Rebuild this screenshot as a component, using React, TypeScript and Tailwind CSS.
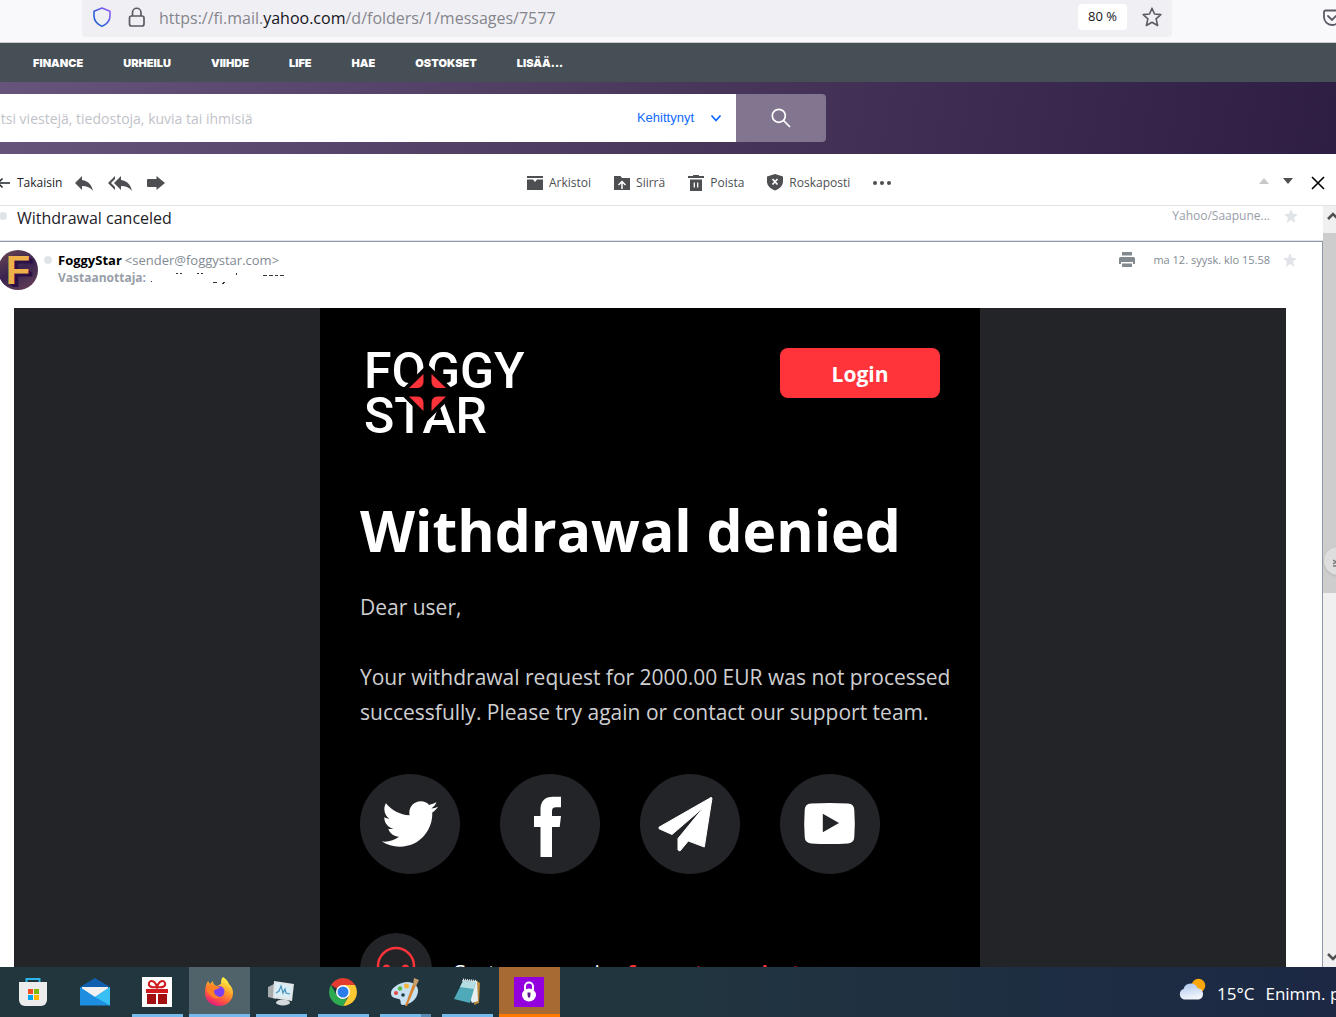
import { FaTwitter } from "react-icons/fa";
import { MdReply, MdReplyAll } from "react-icons/md";

const navLinks = ["FINANCE", "URHEILU", "VIIHDE", "LIFE", "HAE", "OSTOKSET", "LISÄÄ..."];

function BrowserBar() {
  return (
    <header className="flex h-[43px] shrink-0 items-start border-b border-[#cccccf] bg-[#f9f9fb]">
      <div className="ml-[82px] flex h-[37px] min-w-0 flex-1 items-center rounded-b bg-[#f0f0f4] pr-[10px] pb-1 pl-[10px]">
        <svg className="h-5 w-5 shrink-0" viewBox="0 0 20 20" fill="none">
          <defs>
            <linearGradient id="shield" x1="0" y1="1" x2="1" y2="0">
              <stop offset="0.3" stopColor="#2a5fd8" />
              <stop offset="1" stopColor="#9a5cf8" />
            </linearGradient>
          </defs>
          <path
            d="M10 1 18 4.2V9C18 13.5 14.5 18 10 19.2 5.5 18 2 13.5 2 9V4.2Z"
            stroke="url(#shield)"
            strokeWidth="1.6"
            strokeLinejoin="round"
          />
        </svg>
        <svg className="ml-[15px] h-5 w-5 shrink-0" viewBox="0 0 20 20" fill="none" stroke="#5b5b66" strokeWidth="1.7">
          <rect x="2.5" y="9" width="14.5" height="10" rx="2" />
          <path d="M5.5 9V5.5a4.2 4.2 0 0 1 8.5 0V9" />
        </svg>
        <p className="mt-[2px] ml-3 min-w-0 flex-1 truncate font-['Open_Sans',sans-serif] text-[16px] leading-6 text-[#85858d]">
          https://fi.mail.<span className="text-[#15141a]">yahoo.com</span>/d/folders/1/messages/7577
        </p>
        <button className="h-[26px] w-[49px] shrink-0 rounded bg-white font-['Open_Sans',sans-serif] text-[13px] text-[#15141a]">
          80 %
        </button>
        <button aria-label="Bookmark" className="ml-[15px] shrink-0">
          <svg className="h-5 w-5" viewBox="0 0 20 20" fill="none" stroke="#5b5b66" strokeWidth="1.6" strokeLinejoin="round">
            <path d="M10 1.2 12.5 7l6.3.6-4.7 4.2 1.5 6.7L10 15.2l-5.6 3.3 1.5-6.7L1.2 7.6 7.5 7Z" />
          </svg>
        </button>
      </div>
      <div className="flex h-9 w-[164px] shrink-0 items-center justify-end overflow-hidden">
        <button aria-label="Pocket" className="-mr-[6px]">
          <svg className="h-5 w-5" viewBox="0 0 20 20" fill="none" stroke="#5b5b66" strokeWidth="1.8">
            <path d="M3.5 2.5h13A1.5 1.5 0 0 1 18 4v5a8 8 0 0 1-16 0V4a1.5 1.5 0 0 1 1.5-1.5Z" />
            <path d="m6 8 4 4 4-4" strokeLinecap="round" />
          </svg>
        </button>
      </div>
    </header>
  );
}

function YahooHeader() {
  return (
    <>
      <nav className="flex h-[39px] shrink-0 items-center gap-10 bg-[#464e56] pt-[2px] pl-[33px] font-['Inter',sans-serif] text-[11px] font-black text-white">
        {navLinks.map((link) => (
          <a key={link} href="#">
            {link}
          </a>
        ))}
      </nav>
      <div className="flex h-[72px] shrink-0 items-center bg-linear-[100deg] from-[#67547b] via-[#49375c] to-[#2f1e44]">
        <form className="-ml-5 flex h-12 w-[846px] overflow-hidden rounded">
          <input
            type="text"
            aria-label="Haku"
            placeholder="Etsi viestejä, tiedostoja, kuvia tai ihmisiä"
            className="min-w-0 flex-1 bg-white pl-[13px] font-['Open_Sans',sans-serif] text-[14px] placeholder:text-[#bfc3c9]"
          />
          <button
            type="button"
            className="flex items-center gap-4 bg-white pr-[14px] font-['Liberation_Sans',sans-serif] text-[13px] text-[#0f69ff]"
          >
            Kehittynyt
            <svg className="h-3 w-3" viewBox="0 0 12 12" fill="none" stroke="#0f69ff" strokeWidth="1.8">
              <path d="m1.5 3.5 4.5 5 4.5-5" />
            </svg>
          </button>
          <button type="button" aria-label="Etsi" className="flex w-[90px] items-center justify-center bg-[#81758f]">
            <svg className="h-5 w-5" viewBox="0 0 20 20" fill="none" stroke="white" strokeWidth="1.7">
              <circle cx="7.8" cy="7.8" r="6.5" />
              <path d="m12.5 12.5 6.5 6.5" />
            </svg>
          </button>
        </form>
      </div>
    </>
  );
}

function ArchiveIcon() {
  return (
    <svg className="h-4 w-4" viewBox="0 0 16 16" fill="#4d4f52">
      <path d="M0 1h16v2H0ZM0 4.500h6L8 7l2-2.500h6V15H0Z" />
    </svg>
  );
}

function MoveIcon() {
  return (
    <svg className="h-4 w-4" viewBox="0 0 16 16">
      <path d="M0 1h6.500L8 3h8v12H0Z" fill="#4d4f52" />
      <path d="M8 14V7M4.500 10 8 6.500l3.500 3.500" fill="none" stroke="white" strokeWidth="1.5" />
    </svg>
  );
}

function TrashIcon() {
  return (
    <svg className="h-4 w-4" viewBox="0 0 16 16">
      <path d="M0 1h5V0h6v1h5v2H0ZM2 4.500h12V16H2Z" fill="#4d4f52" />
      <path d="M6.300 7.500v5M9.700 7.500v5" stroke="white" strokeWidth="1.3" />
    </svg>
  );
}

function SpamIcon() {
  return (
    <svg className="h-[17px] w-4" viewBox="0 0 16 17">
      <path d="m8 0 8 2.500v5c0 4-3.500 7.500-8 9-4.500-1.500-8-5-8-9v-5Z" fill="#4d4f52" />
      <path d="m5.500 5 5 5.500m0-5.500-5 5.500" stroke="white" strokeWidth="1.7" />
    </svg>
  );
}

const actions = [
  { label: "Arkistoi", icon: <ArchiveIcon /> },
  { label: "Siirrä", icon: <MoveIcon /> },
  { label: "Poista", icon: <TrashIcon /> },
  { label: "Roskaposti", icon: <SpamIcon /> },
];

function Toolbar() {
  return (
    <div className="flex h-[52px] shrink-0 items-center border-b border-[#e0e4e9] bg-white pt-[6px] font-['Open_Sans',sans-serif] text-[12px] text-[#4d4f52]">
      <div className="flex w-[527px] shrink-0 items-center">
        <button className="-ml-1 flex items-center gap-[7px] text-[#1d2228]">
          <svg className="h-[14px] w-[14px]" viewBox="0 0 14 14" fill="none" stroke="#1d2228" strokeWidth="1.5">
            <path d="M14 7H2M6.500 2.500 2 7l4.500 4.500" />
          </svg>
          Takaisin
        </button>
        <button aria-label="Vastaa" className="ml-[10px]">
          <MdReply className="h-6 w-6" />
        </button>
        <button aria-label="Vastaa kaikille" className="ml-3">
          <MdReplyAll className="h-6 w-6" />
        </button>
        <button aria-label="Lähetä edelleen" className="ml-[15px]">
          <svg className="h-4 w-[18px]" viewBox="0 0 18 16" fill="#4d4f52">
            <path d="M1 4h8.500V1L18 8l-8.500 7v-3H1a1 1 0 0 1-1-1V5a1 1 0 0 1 1-1Z" />
          </svg>
        </button>
      </div>
      <div className="flex flex-1 items-center gap-[23px]">
        {actions.map((action) => (
          <button key={action.label} className="flex items-center gap-[6px]">
            {action.icon}
            {action.label}
          </button>
        ))}
        <button aria-label="Lisää">
          <svg className="h-4 w-[18px]" viewBox="0 0 18 16" fill="#4d4f52">
            <circle cx="2" cy="8" r="2" />
            <circle cx="9" cy="8" r="2" />
            <circle cx="16" cy="8" r="2" />
          </svg>
        </button>
      </div>
      <div className="flex items-center gap-[14px] pr-[11px]">
        <button aria-label="Edellinen">
          <svg className="h-[10px] w-[10px]" viewBox="0 0 10 10" fill="#c7c9cc">
            <path d="M0 6 5 0l5 6Z" />
          </svg>
        </button>
        <button aria-label="Seuraava">
          <svg className="h-[10px] w-[10px]" viewBox="0 0 10 10" fill="#4d4f52">
            <path d="M0 0h10L5 6Z" />
          </svg>
        </button>
        <button aria-label="Sulje" className="ml-1">
          <svg className="h-[14px] w-[14px]" viewBox="0 0 14 14" stroke="#000" strokeWidth="1.6">
            <path d="m1 1 12 12M13 1 1 13" />
          </svg>
        </button>
      </div>
    </div>
  );
}

function Star() {
  return (
    <svg className="h-[14px] w-[14px]" viewBox="0 0 14 14" fill="#e0e4e9">
      <path d="m7 0 1.900 4.800 5.100.4-3.900 3.200L11.300 14 7 11 2.700 14l1.200-5.600L0 5.200l5.100-.4Z" />
    </svg>
  );
}

function MessageHeader() {
  return (
    <div className="flex h-[66px] items-start pt-2 font-['Open_Sans',sans-serif]">
      <div className="-ml-[2px] flex h-10 w-10 shrink-0 items-center justify-center rounded-full bg-linear-[150deg] from-[#6b4a52] via-[#3a2350] to-[#6b4558] font-['Liberation_Sans',sans-serif] text-[40px] leading-10 font-bold text-[#eeb04a] [text-shadow:2px_2px_0_#2b1045,4px_3px_0_#2b1045]">
        F
      </div>
      <span className="mt-[6px] ml-[6px] h-2 w-2 rounded-full bg-[#e0e4e9]" />
      <div className="mt-px ml-[6px]">
        <p className="flex gap-[3px] text-[13px] leading-[18px] text-[#828a93]">
          <b className="text-black">FoggyStar</b>
          <span>&lt;sender@foggystar.com&gt;</span>
        </p>
        <p className="flex gap-1 text-[12px] leading-[18px] font-bold text-[#979ea8]">
          Vastaanottaja:
          <svg className="h-[18px] w-[140px]" viewBox="0 0 140 18" fill="#333">
            <path d="M1 12h1v1H1ZM26 4h2v1h-2ZM30 4h2v1h-2ZM47 4h2v1h-2ZM51 4h2v1h-2ZM63 13h4v1h-4ZM73 13h2v1h-2ZM72 14h2v1h-2ZM86 4h1v2h-1ZM113 6h4v1h-4ZM119 6h4v1h-4ZM125 6h3v1h-3ZM130 6h4v1h-4Z" />
          </svg>
        </p>
      </div>
      <div className="mt-[2px] ml-auto flex items-center pr-[25px]">
        <button aria-label="Tulosta">
          <svg className="h-4 w-4" viewBox="0 0 16 16" fill="#828a8f">
            <path d="M3 0h10v3.500H3ZM1.500 5h13A1.500 1.500 0 0 1 16 6.500V12h-2v-2H2v2H0V6.500A1.500 1.500 0 0 1 1.500 5ZM3 11.500h10V15H3Z" />
          </svg>
        </button>
        <time className="ml-[18px] text-[11px] text-[#828a93]">ma 12. syysk. klo 15.58</time>
        <button aria-label="Tähti" className="ml-[13px]">
          <Star />
        </button>
      </div>
    </div>
  );
}

function Logo() {
  return (
    <div className="relative mt-px pl-1 font-['Roboto',sans-serif] text-[50px] leading-[45px] font-medium text-white">
      <p>FOGGY</p>
      <p>STAR</p>
      <svg className="absolute top-0 left-0 h-[90px] w-[170px]" viewBox="0 3 170 90">
        <path d="M67.500 18 96 46.500 67.500 75 39 46.500Z" fill="black" />
        <g fill="#ff333a">
          <path d="M63.500 28v7c0 4-2 7-6 7h-8.500Z" />
          <path d="M71.500 28v7c0 4 2 7 6 7H86Z" />
          <path d="M49 50.500h8.500c4 0 6 3 6 7v7.500Z" />
          <path d="M86 50.500h-8.500c-4 0-6 3-6 7v7.500Z" />
        </g>
      </svg>
    </div>
  );
}

const socials = [
  { name: "Twitter", icon: <FaTwitter className="h-14 w-14" /> },
  {
    name: "Facebook",
    icon: (
      <svg className="h-[100px] w-[100px]" viewBox="0 0 100 100" fill="white">
        <path d="M40.500 83V53H34V42h6.500v-6.500C40.500 27 45 22.700 53 22.700h8v10.600h-5c-3 0-4 1.500-4 4V42h9l-1.300 11H52v30Z" />
      </svg>
    ),
  },
  {
    name: "Telegram",
    icon: (
      <svg className="h-[100px] w-[100px]" viewBox="0 0 100 100" fill="white" stroke="white" strokeLinejoin="round">
        <path d="m72 24-7.700 49-16-6L40 77l-2-1V64.500L63.600 33.300 32 60.500 19 54.700v-1.500L71 23.500Z" />
      </svg>
    ),
  },
  {
    name: "YouTube",
    icon: (
      <svg className="h-[100px] w-[100px]" viewBox="0 0 100 100" fill="white">
        <path
          fillRule="evenodd"
          d="M31 29.600q18.500-1.400 37 0 6 .4 6.300 6.400 1 13.500 0 27-.3 6-6.300 6.400-18.500 1.400-37 0-6-.4-6.300-6.400-1-13.500 0-27 .3-6 6.300-6.400ZM42.800 39.700v18.600L59 49Z"
        />
      </svg>
    ),
  },
];

function EmailBody() {
  return (
    <div className="mr-9 ml-[14px] flex justify-center bg-[#232428]">
      <article className="w-[660px] bg-black py-10 pr-5 pl-10 font-['Open_Sans',sans-serif] text-[21px] leading-[35px] text-[#cfcfd1]">
        <div className="flex h-[90px] items-start justify-between pr-5">
          <Logo />
          <a
            href="#"
            className="flex h-[50px] w-40 items-center justify-center rounded-lg bg-[#ff333a] pt-[2px] font-bold text-white"
          >
            Login
          </a>
        </div>
        <h1 className="mt-14 text-[57px] leading-[72px] font-bold whitespace-nowrap text-white">Withdrawal denied</h1>
        <p className="mt-6">Dear user,</p>
        <p className="mt-[35px]">
          Your withdrawal request for 2000.00 EUR was not processed successfully. Please try again or contact our support team.
        </p>
        <div className="mt-11 flex gap-10">
          {socials.map((social) => (
            <a
              key={social.name}
              href="#"
              aria-label={social.name}
              className="flex h-[100px] w-[100px] items-center justify-center rounded-full bg-[#232428] text-white"
            >
              {social.icon}
            </a>
          ))}
        </div>
        <div className="mt-[59px] flex h-[72px] items-center gap-5">
          <svg className="h-[72px] w-[72px] shrink-0" viewBox="0 0 72 72">
            <circle cx="36" cy="36" r="36" fill="#232428" />
            <path d="M18 44V33a18 18 0 0 1 36 0v11" fill="none" stroke="#ff333a" strokeWidth="2.5" />
            <path d="M23 35a3.500 3.500 0 0 1 7 0v12h-7ZM42 35a3.500 3.500 0 0 1 7 0v12h-7Z" fill="#ff333a" />
          </svg>
          <p className="pt-2 whitespace-nowrap text-white">
            Customer service{" "}
            <a href="#" className="font-bold text-[#ff333a]">
              foggystarproject.com
            </a>
          </p>
        </div>
      </article>
    </div>
  );
}

function Scrollbar() {
  return (
    <div className="relative flex w-[13px] shrink-0 flex-col items-end justify-between overflow-hidden bg-[#f0f0f0]">
      <div className="w-full">
        <svg className="ml-1 h-[27px] w-3" viewBox="0 0 12 27" fill="none" stroke="#505050" strokeWidth="2.5">
          <path d="m1 13 5-5 5 5" />
        </svg>
        <div className="h-[360px] bg-[#cdcdcd]" />
      </div>
      <svg className="h-4 w-3" viewBox="0 0 12 16" fill="none" stroke="#505050" strokeWidth="2.5">
        <path d="m4 3 5 5 5-5" />
      </svg>
      <button aria-label="Näytä sivupaneeli" className="absolute top-[341px] left-px h-7 w-7 rounded-full bg-[#dedede] shadow">
        <svg className="mt-1 ml-2 h-4 w-3" viewBox="0 0 12 16" fill="none" stroke="#777" strokeWidth="1.5">
          <path d="m1 5 3 2-3 2M1 11h4" />
        </svg>
      </button>
    </div>
  );
}

function StoreIcon() {
  return (
    <svg className="h-[30px] w-[30px]" viewBox="0 0 30 30">
      <path d="M8.500 6V2h13v4" fill="none" stroke="#2fb4e8" strokeWidth="2" />
      <path d="M1 5h28v18a6 6 0 0 1-6 6H7a6 6 0 0 1-6-6Z" fill="#ececec" />
      <path d="M10 12h5v5h-5Z" fill="#f25022" />
      <path d="M16 12h5v5h-5Z" fill="#7fba00" />
      <path d="M10 18h5v5h-5Z" fill="#00a4ef" />
      <path d="M16 18h5v5h-5Z" fill="#ffb900" />
    </svg>
  );
}

function MailIcon() {
  return (
    <svg className="h-[30px] w-[30px]" viewBox="0 0 30 30">
      <path d="M0 10 15 1l15 9v5H0Z" fill="#0f5fae" />
      <path d="M2 10h26v10H2Z" fill="#f1f1f1" />
      <path d="M0 10v18.500h30V10L15 20Z" fill="#1e8fe0" />
      <path d="M30 10v18.500L13 18.700 15 20Z" fill="#38c0f4" />
    </svg>
  );
}

function GiftIcon() {
  return (
    <svg className="h-[30px] w-[30px]" viewBox="0 0 30 30">
      <path d="M0 0h30v30H0Z" fill="white" />
      <path d="M15 10C9 11 6 9 7 6s6-3 8 4c2-7 7-7 8-4s-2 5-8 4Z" fill="none" stroke="#cf1a1f" strokeWidth="2" />
      <path d="M4 12h22v4H4Z" fill="#cf1a1f" />
      <path d="M5 17h9v10H5ZM16 17h9v10h-9Z" fill="#a31012" />
    </svg>
  );
}

function FirefoxIcon() {
  return (
    <svg className="h-[30px] w-[30px]" viewBox="0 0 30 30">
      <defs>
        <linearGradient id="fox" x1="0.8" y1="0" x2="0.3" y2="1">
          <stop offset="0.1" stopColor="#fff044" />
          <stop offset="0.45" stopColor="#ff9a2a" />
          <stop offset="0.75" stopColor="#ff4f45" />
          <stop offset="1" stopColor="#e31587" />
        </linearGradient>
      </defs>
      <path
        d="M19 0c3 2 5 4 6 7 3 3 4 6 4 9a14 13 0 0 1-28 0c0-5 1-9 3-12l2 3 3-3c0 3 1 4 4 5l4-2c0-3 0-5 2-7Z"
        fill="url(#fox)"
      />
      <circle cx="15" cy="14.500" r="5.500" fill="#7a3ff0" />
      <path d="M4 8c3-1 6 0 8 1l4 1c-1 2-5 2-6 4 0 4 4 6 7 6-3 2-7 2-10-1-4-3-5-7-3-11Z" fill="#ff8126" />
    </svg>
  );
}

function MonitorIcon() {
  return (
    <svg className="h-[30px] w-[30px]" viewBox="0 0 30 30">
      <path d="m2 10 8-4v16l-8-2Z" fill="#a9acae" />
      <path d="m8 4 20 3-2 17-19-3Z" fill="#e3e6e8" />
      <path d="m10 6 15 3-1 12-15-2Z" fill="#d8eef6" />
      <path d="m10 16 3-2 2-5 2 7 2-4 1 4 4 1" fill="none" stroke="#4a92ba" strokeWidth="1.2" />
      <ellipse cx="17" cy="25.500" rx="7" ry="3" fill="#d6d9db" />
    </svg>
  );
}

function ChromeIcon() {
  return (
    <svg className="h-[30px] w-[30px]" viewBox="0 0 30 30">
      <path d="M15 15 2.900 8a14 14 0 0 1 24.200 0Z" fill="#e33b2e" />
      <path d="M15 15V8h12.100A14 14 0 0 1 15 29l6-10.500Z" fill="#fcc934" />
      <path d="M15 29A14 14 0 0 1 2.900 8L9 18.500l6 3.500 4-.5Z" fill="#2da94f" />
      <circle cx="15" cy="15" r="7" fill="white" />
      <circle cx="15" cy="15" r="5.500" fill="#2a7de9" />
    </svg>
  );
}

function PaintIcon() {
  return (
    <svg className="h-[30px] w-[30px]" viewBox="0 0 30 30">
      <path d="M12 6c9-3 17 2 16 9-1 8-9 13-15 13-4 0-1-5-4-6-4-1-8-1-8-6 0-4 5-8 11-10Z" fill="#c5e0f2" />
      <circle cx="6" cy="16" r="2" fill="#e04a3f" />
      <circle cx="10" cy="11.500" r="2.200" fill="#5bb947" />
      <circle cx="16.500" cy="9" r="2.500" fill="#f4b63a" />
      <circle cx="13" cy="18" r="1.800" fill="#223a44" />
      <path d="m23 7 3 1-9 21h-2Z" fill="#d9822f" />
      <path d="m24 1 5 2-3 6-3-1Z" fill="#c79d6c" />
    </svg>
  );
}

function NotepadIcon() {
  return (
    <svg className="h-[30px] w-[30px]" viewBox="0 0 30 30">
      <path d="m25 4 3 2-1 20-5 2Z" fill="#b98a3c" />
      <path d="m10 3 15 1 1 20-6 2Z" fill="#e8eef0" />
      <path d="m11 4 13 1-6 21-16-4Z" fill="#4fa9b8" />
      <path d="m11 4 13 1-2 7-14-2Z" fill="#b5dde3" />
      <path d="M11 2.500 25 4" stroke="#dfe3e4" strokeWidth="2" strokeDasharray="1 1" />
    </svg>
  );
}

function LockIcon() {
  return (
    <svg className="h-[30px] w-[30px]" viewBox="0 0 30 30">
      <path d="M0 0h30v30H0Z" fill="#9400dd" />
      <path d="M11 13V9.500a4 4 0 0 1 8 0V13" fill="none" stroke="white" strokeWidth="2" />
      <ellipse cx="15" cy="18" rx="7" ry="6.500" fill="white" />
      <path d="M13.500 15.500h3v2L16 20.500h-2l-.5-3Z" fill="#5c1a86" />
    </svg>
  );
}

const apps = [
  { name: "Microsoft Store", icon: <StoreIcon />, tile: "", line: "" },
  { name: "Sähköposti", icon: <MailIcon />, tile: "", line: "" },
  { name: "Lahja", icon: <GiftIcon />, tile: "", line: "ml-[5px] w-[51px] bg-[#76b9ed]" },
  { name: "Firefox", icon: <FirefoxIcon />, tile: "bg-[#50636a]", line: "w-full bg-[#76b9ed]" },
  { name: "Tehtävienhallinta", icon: <MonitorIcon />, tile: "", line: "ml-[5px] w-[51px] bg-[#76b9ed]" },
  { name: "Chrome", icon: <ChromeIcon />, tile: "", line: "ml-[5px] w-[51px] bg-[#76b9ed]" },
  { name: "Paint", icon: <PaintIcon />, tile: "", line: "ml-[5px] w-[51px] border-r-[10px] border-[#5a8cb5] bg-[#76b9ed]" },
  { name: "Muistio", icon: <NotepadIcon />, tile: "", line: "ml-[5px] w-[51px] bg-[#76b9ed]" },
  { name: "Salasanat", icon: <LockIcon />, tile: "bg-[#a66a32]", line: "w-full bg-[#ff7800]" },
];

function Taskbar() {
  return (
    <footer className="flex h-[50px] shrink-0 bg-linear-to-r from-[#22363e] via-[#21353f] to-[#1c2844] pl-[3px]">
      <div className="flex gap-px">
        {apps.map((app) => (
          <button
            key={app.name}
            aria-label={app.name}
            className={`flex w-[61px] flex-col items-start justify-between pt-[10px] ${app.tile}`}
          >
            <span className="ml-[15px]">{app.icon}</span>
            <span className={`h-[3px] ${app.line}`} />
          </button>
        ))}
      </div>
      <button className="ml-auto flex w-[158px] items-center overflow-hidden pt-1 font-['Open_Sans',sans-serif] text-[17px] whitespace-nowrap text-white">
        <svg className="mb-[6px] h-7 w-7 shrink-0" viewBox="0 0 28 28">
          <defs>
            <linearGradient id="cloud" x1="0" y1="0" x2="0.3" y2="1">
              <stop offset="0" stopColor="#a9c3ee" />
              <stop offset="1" stopColor="#f2f5fb" />
            </linearGradient>
          </defs>
          <circle cx="20.500" cy="8.500" r="6.800" fill="#fca80a" />
          <path d="M6 22.500a5.500 5.500 0 0 1-.5-10.500 7.500 7.500 0 0 1 14.200-.8A5.800 5.800 0 0 1 21 22.500Z" fill="url(#cloud)" />
        </svg>
        <span className="ml-[11px]">15°C</span>
        <span className="ml-[11px]">Enimm. pilvistä</span>
      </button>
    </footer>
  );
}

export default function App() {
  return (
    <div className="flex h-screen flex-col overflow-hidden bg-white">
      <BrowserBar />
      <YahooHeader />
      <Toolbar />
      <main className="flex min-h-0 flex-1">
        <div className="min-w-0 flex-1 overflow-hidden">
          <div className="flex h-[35px] items-start border-b border-[#e0e4e9] font-['Open_Sans',sans-serif]">
            <span className="mt-[6px] -ml-px h-2 w-2 rounded-full bg-[#e0e4e9]" />
            <h2 className="ml-[10px] text-[16px] leading-6 text-[#1d2228]">Withdrawal canceled</h2>
            <div className="ml-auto flex items-center pt-px pr-[25px] text-[12px] text-[#979ea8]">
              Yahoo/Saapune...
              <button aria-label="Tähti" className="ml-[14px]">
                <Star />
              </button>
            </div>
          </div>
          <section className="border-t border-r border-[#8f98a6]">
            <MessageHeader />
            <EmailBody />
          </section>
        </div>
        <Scrollbar />
      </main>
      <Taskbar />
    </div>
  );
}
